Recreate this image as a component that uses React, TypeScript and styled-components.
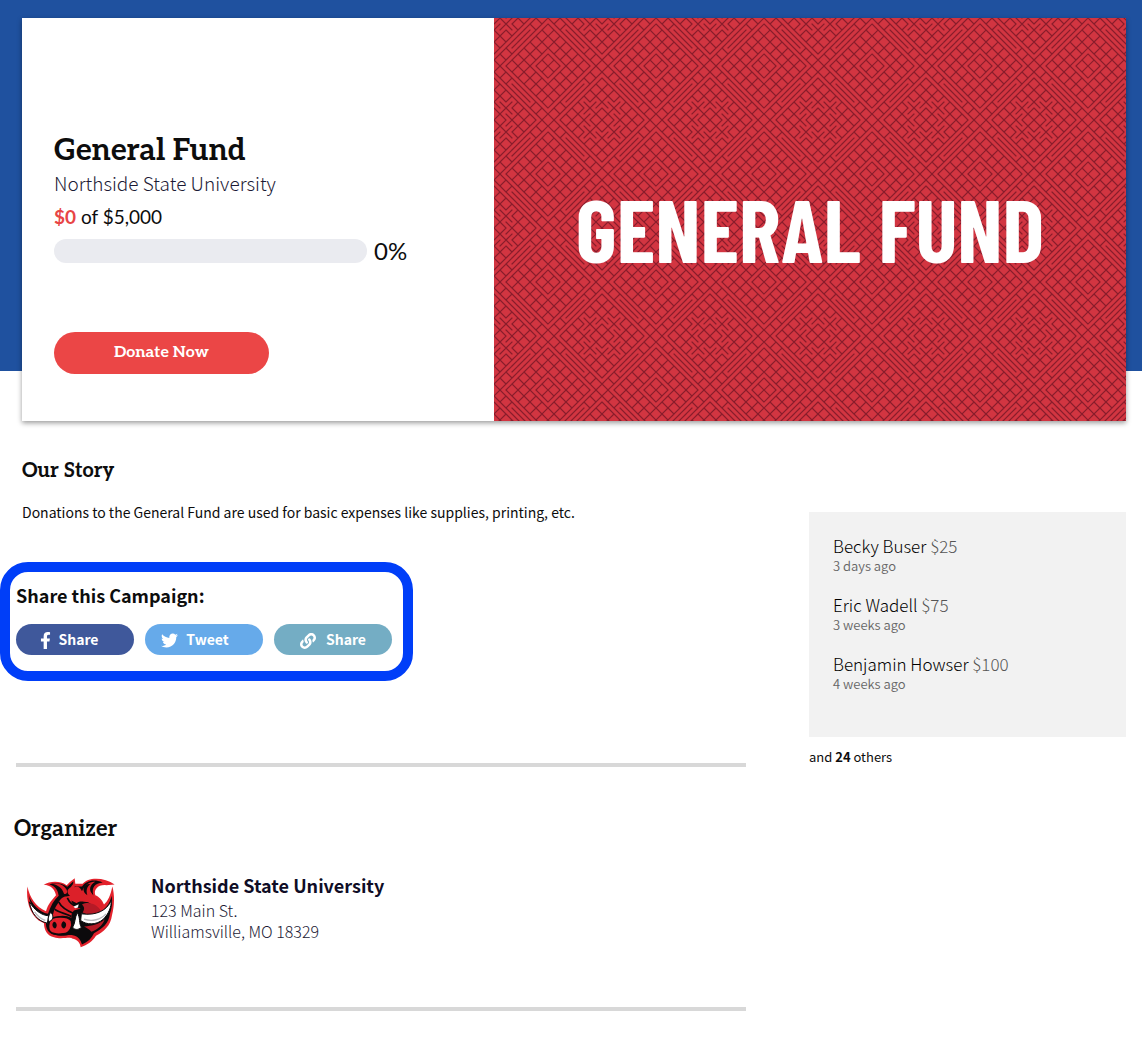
import React from "react";
import styled, { createGlobalStyle } from "styled-components";
import { FaFacebookF, FaLink, FaTwitter } from "react-icons/fa";

const sans = '"Noto Sans CJK JP", "Noto Sans", sans-serif';
const slab = 'Aleo, "Noto Serif", "DejaVu Serif", serif';
const lato = "Lato, sans-serif";
const condensed = '"Barlow Condensed", "Roboto Condensed", "Noto Sans", sans-serif';

const GlobalStyle = createGlobalStyle`
  *, *::before, *::after { box-sizing: border-box; }
  body { margin: 0; background: #fff; color: #0d0d0d; font-family: ${sans}; }
  h1, h2, h3, p, ul, address { margin: 0; padding: 0; }
`;

/* ---------- Hero ---------- */

const Hero = styled.header`
  padding: 18px 16px 0 22px;
  background: linear-gradient(#1f519f, #1f519f) top / 100% 371px no-repeat;
`;

const HeroCard = styled.section`
  display: grid;
  grid-template-columns: 472fr 632fr;
  background: #fff;
  box-shadow: 0 2px 5px rgba(0, 0, 0, 0.4);
`;

const Summary = styled.div`
  padding: 115px 32px 47px;
`;

const Title = styled.h1`
  font: 700 30px/36px ${slab};
`;

const School = styled.p`
  font-size: 19px;
  line-height: 28px;
  font-weight: 300;
  color: #1c1a35;
`;

const Amount = styled.p`
  margin-top: 6px;
  font: 400 19px/28px ${lato};

  strong {
    color: #e84545;
  }
`;

const ProgressRow = styled.div`
  display: flex;
  align-items: center;
  gap: 7px;
  height: 24px;
  margin-top: 8px;
  font: 400 24px/24px ${lato};
`;

const Progress = styled.progress`
  appearance: none;
  width: 313px;
  height: 24px;
  border: 0;
  border-radius: 12px;
  overflow: hidden;
  background: #eaebf0;

  &::-webkit-progress-bar {
    background: #eaebf0;
  }
  &::-webkit-progress-value {
    background: #e84545;
  }
`;

const DonateButton = styled.button`
  display: block;
  width: 215px;
  height: 42px;
  margin-top: 69px;
  border: 0;
  border-radius: 21px;
  background: #eb4646;
  color: #fff;
  font: 700 16px/20px ${slab};
  cursor: pointer;
`;

const Banner = styled.div`
  display: grid;
  align-items: center;
  justify-items: center;
  background: #d23541;

  > * {
    grid-area: 1 / 1;
  }
`;

const BannerTitle = styled.p`
  padding-top: 16px;
  color: #fff;
  font: 700 88px/88px ${condensed};
  white-space: nowrap;
`;

const PatternSvg = styled.svg`
  width: 100%;
  height: 100%;
  min-height: 0;
  contain: size;
`;

/* Each letter is one cell: R runs away from the tile centre, T runs across it. */
const quadrant = [
  "RTTRTRTTR",
  "TRTTRTTRT",
  "TTRRTTRTT",
  "RTRTTTTTR",
  "TRTTTTTRT",
  "RTTTTTRTR",
  "TTRTTRTRT",
  "TRTTRTRTT",
  "RTTRTRTTR",
];

const CELL = 6;
const TILE = CELL * 18;

function weavePath() {
  let d = "";
  for (const sx of [-1, 1]) {
    for (const sy of [-1, 1]) {
      quadrant.forEach((row, b) => {
        [...row].forEach((kind, a) => {
          const point = (i: number, j: number) =>
            `${TILE / 2 + sx * i * CELL} ${TILE / 2 + sy * j * CELL}`;
          d +=
            kind === "R"
              ? `M${point(a, b)}L${point(a + 1, b + 1)}`
              : `M${point(a + 1, b)}L${point(a, b + 1)}`;
        });
      });
    }
  }
  return d;
}

const Weave = () => (
  <PatternSvg aria-hidden="true">
    <defs>
      <pattern id="weave" x="54" y="48" width={TILE} height={TILE} patternUnits="userSpaceOnUse">
        <path d={weavePath()} fill="none" stroke="#891c2b" strokeWidth="1.2" strokeLinecap="square" />
      </pattern>
    </defs>
    <rect width="100%" height="100%" fill="url(#weave)" />
  </PatternSvg>
);

/* ---------- Body ---------- */

const Content = styled.main`
  display: grid;
  grid-template-columns: minmax(0, 1fr) 317px;
  gap: 63px;
  padding: 36px 16px 35px;
`;

const Heading = styled.h2`
  font: 700 20px/28px ${slab};
`;

const Story = styled.section`
  padding-left: 6px;
`;

const StoryText = styled.p`
  margin-top: 16px;
  font-size: 14px;
  line-height: 22px;
`;

const ShareBox = styled.section`
  width: fit-content;
  margin: 39px 0 82px -16px;
  padding: 11px 11px 16px 6px;
  border: 10px solid #003ef8;
  border-radius: 28px;
`;

const ShareTitle = styled.h3`
  font-size: 18px;
  line-height: 24px;
  font-weight: 700;
`;

const ShareRow = styled.div`
  display: flex;
  gap: 11px;
  margin-top: 17px;
`;

const ShareButton = styled.button<{ $color: string; $gap: number; $shift: number }>`
  display: flex;
  align-items: center;
  justify-content: center;
  gap: ${(p) => p.$gap}px;
  width: 118px;
  height: 31px;
  padding: 0 ${(p) => p.$shift}px 0 0;
  border: 0;
  border-radius: 16px;
  background: ${(p) => p.$color};
  color: #fff;
  font: 700 14px/20px ${sans};
  cursor: pointer;

  svg {
    margin-top: 2px;
  }
`;

const ShareLabel = styled.span`
  padding-bottom: 2px;
`;

const Divider = styled.hr`
  height: 4px;
  margin: 0;
  border: 0;
  background: #d8d8d8;
`;

const Organizer = styled.section`
  margin: 48px 0 59px;
`;

const OrganizerHeading = styled(Heading)`
  font-size: 22px;
  margin-left: -2px;
`;

const OrganizerRow = styled.div`
  display: flex;
  gap: 36px;
  margin-top: 29px;
  padding-left: 9px;

  svg {
    margin-top: 4px;
  }
`;

const Address = styled.address`
  font-style: normal;
  font-weight: 300;
  font-size: 16px;
  line-height: 21px;
  color: #1c1a35;
`;

const OrganizerName = styled.h3`
  margin-bottom: 2px;
  font-size: 18px;
  line-height: 26px;
  font-weight: 700;
  color: #0f0d26;
`;

const Donors = styled.aside`
  padding-top: 55px;
  font-size: 13px;
`;

const DonorList = styled.ul`
  display: grid;
  gap: 19px;
  padding: 24px 24px 43px;
  background: #f2f2f2;
  list-style: none;
`;

const DonorName = styled.p`
  font-size: 17px;
  line-height: 20px;
  font-weight: 300;
  color: #000;

  span {
    color: #555;
  }
`;

const DonorTime = styled.p`
  line-height: 20px;
  font-weight: 350;
  color: #666;
`;

const Others = styled.p`
  margin-top: 10px;
  line-height: 20px;
`;

const donors = [
  { name: "Becky Buser", amount: "$25", time: "3 days ago" },
  { name: "Eric Wadell", amount: "$75", time: "3 weeks ago" },
  { name: "Benjamin Howser", amount: "$100", time: "4 weeks ago" },
];

const BoarLogo = () => (
  <svg width="90" height="72" viewBox="45 35 270 215" role="img" aria-label="Boar mascot">
    {/* red silhouette */}
    <path
      fill="#e3222c"
      d="M52 66C48 108 58 146 86 168L102 176C102 196 112 214 132 218C152 226 180 216 186 222C204 226 210 236 212 248C232 242 248 230 258 214C280 202 302 184 306 152C314 122 314 90 307 66C302 92 294 110 282 120C276 104 266 96 256 92C250 76 264 60 288 62L314 60C284 38 234 36 218 58L196 58L194 41L178 54L170 62C148 48 120 50 101 61C122 62 134 74 138 92C126 106 114 118 108 140C76 126 60 100 52 66Z"
    />
    {/* black mask */}
    <path
      fill="#0c0a0c"
      d="M56 92C62 124 76 152 102 162L108 172C106 192 116 208 134 211C154 218 174 210 188 212C206 216 212 226 216 240C234 232 246 220 252 206C276 194 296 178 300 148C306 130 308 112 305 94C298 122 284 138 266 144C254 128 238 112 220 106L250 92C244 70 254 56 278 54C250 42 228 50 216 66L190 66L190 50L172 67C154 54 132 54 118 60C138 66 144 78 146 94C132 106 122 124 114 148C88 142 66 120 56 92Z"
    />
    {/* face and ears */}
    <path
      fill="#dc2029"
      d="M182 68L194 52L194 68C204 62 212 70 216 80C226 58 240 52 256 52C238 62 236 78 248 90C252 100 262 104 276 116L278 134C262 122 240 112 222 112C212 110 204 112 200 116L184 108C188 122 198 128 212 132L192 138C184 146 184 152 184 160C166 150 140 152 128 164C128 144 134 130 144 116C150 104 160 96 168 96L180 94C168 82 172 74 182 68Z"
    />
    <path fill="#0c0a0c" d="M222 66C228 60 236 58 242 58C230 68 228 78 232 92C222 86 218 76 222 66Z" />
    <path fill="#dc2029" d="M126 58C148 54 162 62 170 76C174 86 168 90 162 88C156 70 144 62 126 58Z" />
    <path fill="#b51a26" d="M216 120C238 108 268 122 276 146C256 156 232 152 218 144C224 134 224 128 216 120Z" />
    <path fill="#b51a26" d="M222 186C246 184 270 178 284 164C278 184 260 196 244 202C238 194 230 190 222 186Z" />
    {/* brow and cheek lines */}
    <path
      fill="none"
      stroke="#0c0a0c"
      strokeWidth="5"
      d="M146 112C152 124 170 138 190 146M134 134C148 146 168 146 184 156M172 100C178 114 190 124 206 130"
    />
    <path fill="#fff" d="M190 127L206 119L204 129L196 131Z" />
    {/* snout */}
    <path
      fill="#e3222c"
      stroke="#0c0a0c"
      strokeWidth="5"
      d="M118 170C124 154 172 152 184 168C190 184 180 208 160 208C142 212 118 208 116 192C114 184 116 178 118 170Z"
    />
    <path
      fill="#0c0a0c"
      d="M132 172C142 172 143 190 135 192C126 190 125 176 132 172ZM160 170C170 172 172 186 162 192C154 190 150 178 160 170Z"
    />
    {/* tusks */}
    <path
      fill="#fff"
      stroke="#0c0a0c"
      strokeWidth="3"
      d="M58 112C64 148 84 170 112 176L116 154C94 152 74 138 58 112ZM304 108C290 138 260 154 214 148L212 168C230 182 260 182 280 164C296 148 304 128 304 108Z"
    />
    <path
      fill="#fff"
      stroke="#0c0a0c"
      strokeWidth="3"
      d="M202 144C212 162 206 176 214 188C206 198 192 196 188 188C196 176 194 160 202 144ZM122 144C130 150 130 160 126 166L118 172C112 164 116 152 122 144Z"
    />
    <path fill="none" stroke="#b9b9bd" strokeWidth="4" d="M222 164C246 172 272 166 288 148M74 142C82 154 94 164 106 168" />
  </svg>
);

export default function App() {
  return (
    <>
      <GlobalStyle />
      <Hero>
        <HeroCard>
          <Summary>
            <Title>General Fund</Title>
            <School>Northside State University</School>
            <Amount>
              <strong>$0</strong> of $5,000
            </Amount>
            <ProgressRow>
              <Progress id="raised" value={0} max={5000} />
              <label htmlFor="raised">0%</label>
            </ProgressRow>
            <DonateButton type="button">Donate Now</DonateButton>
          </Summary>
          <Banner>
            <Weave />
            <BannerTitle>GENERAL FUND</BannerTitle>
          </Banner>
        </HeroCard>
      </Hero>

      <Content>
        <div>
          <Story>
            <Heading>Our Story</Heading>
            <StoryText>
              Donations to the General Fund are used for basic expenses like supplies, printing, etc.
            </StoryText>
          </Story>
          <ShareBox>
            <ShareTitle>Share this Campaign:</ShareTitle>
            <ShareRow>
              <ShareButton type="button" $color="#3f589b" $gap={4} $shift={14}>
                <FaFacebookF size={17} />
                <ShareLabel>Share</ShareLabel>
              </ShareButton>
              <ShareButton type="button" $color="#66aaea" $gap={8} $shift={18}>
                <FaTwitter size={17} />
                <ShareLabel>Tweet</ShareLabel>
              </ShareButton>
              <ShareButton type="button" $color="#74adc4" $gap={10} $shift={0}>
                <FaLink size={16} />
                <ShareLabel>Share</ShareLabel>
              </ShareButton>
            </ShareRow>
          </ShareBox>
          <Divider />
          <Organizer>
            <OrganizerHeading>Organizer</OrganizerHeading>
            <OrganizerRow>
              <BoarLogo />
              <Address>
                <OrganizerName>Northside State University</OrganizerName>
                <p>123 Main St.</p>
                <p>Williamsville, MO 18329</p>
              </Address>
            </OrganizerRow>
          </Organizer>
          <Divider />
        </div>

        <Donors aria-label="Recent donors">
          <DonorList>
            {donors.map((d) => (
              <li key={d.name}>
                <DonorName>
                  {d.name} <span>{d.amount}</span>
                </DonorName>
                <DonorTime>{d.time}</DonorTime>
              </li>
            ))}
          </DonorList>
          <Others>
            and <strong>24</strong> others
          </Others>
        </Donors>
      </Content>
    </>
  );
}
